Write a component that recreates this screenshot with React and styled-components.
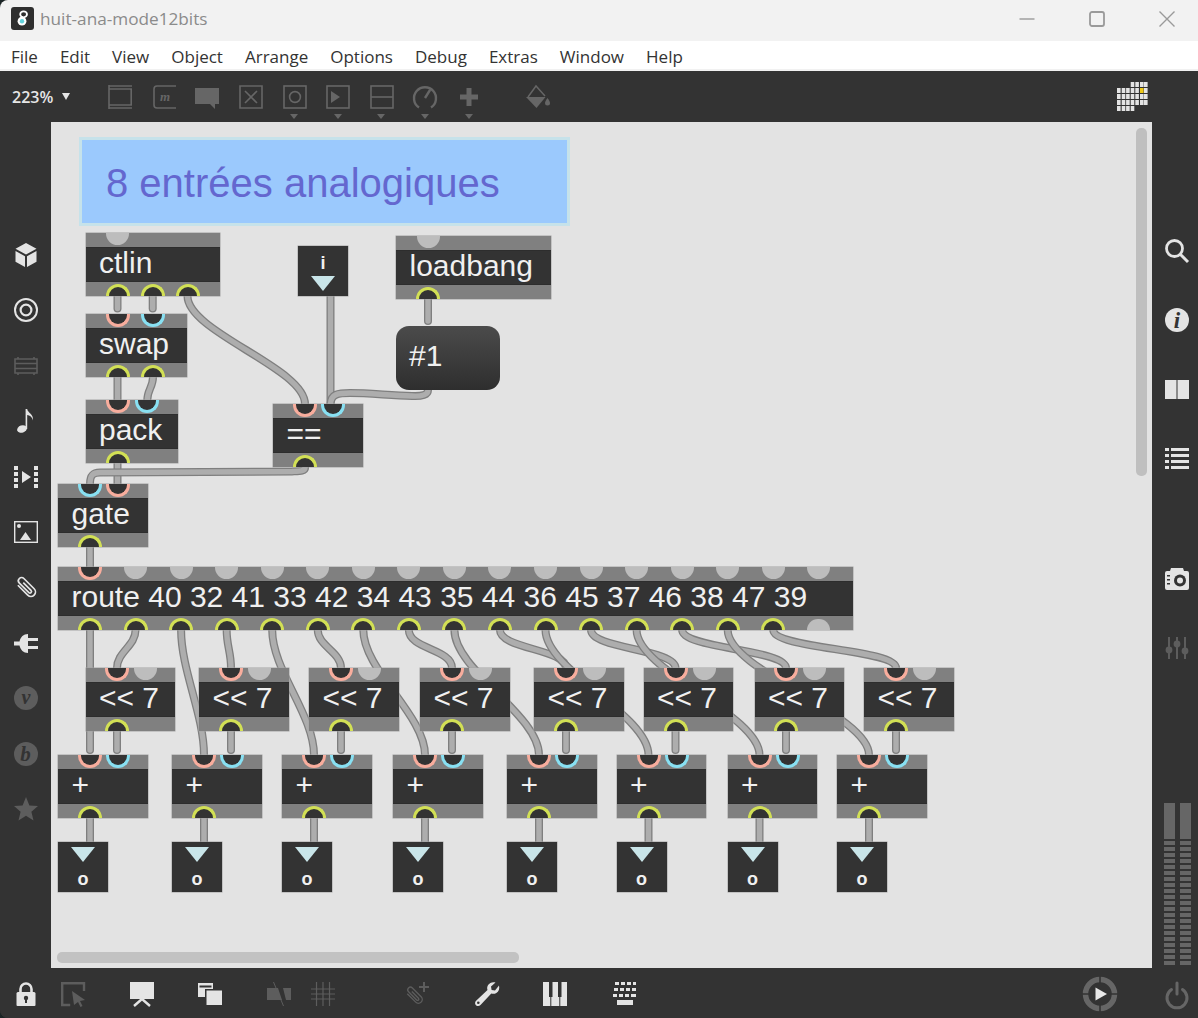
import React from 'react';
import styled, { createGlobalStyle } from 'styled-components';

const GlobalStyle = createGlobalStyle`
  html, body {
    margin: 0;
    padding: 0;
    background: #1b2526;
  }
  #root {
    width: 1198px;
    height: 1018px;
  }
`;

const Win = styled.div`
  width: 1198px;
  height: 1018px;
  display: grid;
  grid-template-rows: 41px 30px 51px 846px 50px;
  border-radius: 8px 0 0 8px;
  overflow: hidden;
  background: #333333;
  font-family: 'Liberation Sans', Arial, sans-serif;
`;

const TitleBar = styled.div`
  display: flex;
  align-items: center;
  box-sizing: border-box;
  background: #f2f2f2;
  padding: 0 0 4px 11px;
`;

const TitleText = styled.span`
  margin-left: 6px;
  font-family: 'Open Sans', sans-serif;
  font-size: 17.2px;
  color: #8b8b8b;
`;

const WinButtons = styled.div`
  margin-left: auto;
  display: flex;
  align-items: center;
  padding-right: 23px;
  gap: 54px;
`;

const WinBtn = styled.svg`
  width: 16px;
  height: 16px;
  fill: none;
  stroke: #9a9a9a;
  stroke-width: 1.4;
`;

const MenuBar = styled.div`
  display: flex;
  align-items: center;
  gap: 22px;
  padding: 2px 0 0 11px;
  background: #ffffff;
  border-bottom: 2px solid #f1f1f1;
  box-sizing: border-box;
  font-family: 'Open Sans', sans-serif;
  font-size: 17px;
  color: #333333;
`;

const ToolBar = styled.div`
  display: flex;
  align-items: center;
  padding-left: 12px;
  background: #333333;
`;

const ZoomText = styled.span`
  font-family: 'Open Sans', sans-serif;
  font-size: 16px;
  font-weight: 600;
  color: #e6e6e6;
`;

const ZoomCaret = styled.span`
  margin-left: 9px;
  border-left: 4.5px solid transparent;
  border-right: 4.5px solid transparent;
  border-top: 7px solid #e6e6e6;
`;

const ToolGroup = styled.div`
  display: flex;
  align-items: center;
  gap: 19.6px;
  margin-left: 38px;
`;

const ToolSlot = styled.span`
  position: relative;
  display: flex;
  margin-left: ${(p) => p.$gap || 0}px;
  &::after {
    content: ${(p) => (p.$caret ? "''" : 'none')};
    position: absolute;
    left: 7.5px;
    bottom: -10px;
    border-left: 4.5px solid transparent;
    border-right: 4.5px solid transparent;
    border-top: 5px solid #666666;
  }
`;

const Middle = styled.div`
  display: grid;
  grid-template-columns: 51px 1101px 46px;
  min-height: 0;
`;

const LeftRail = styled.div`
  display: flex;
  flex-direction: column;
  align-items: center;
  gap: 31.4px;
  padding-top: 121px;
`;

const RightRail = styled.div`
  display: flex;
  flex-direction: column;
  align-items: center;
  padding: 117px 0 3px 4px;
`;

const RailGroup = styled.div`
  display: flex;
  flex-direction: column;
  gap: 45.3px;
  margin-top: ${(p) => p.$top || 0}px;
`;

const Meters = styled.div`
  margin-top: auto;
  display: flex;
  gap: 5px;
`;

const MeterColumn = styled.div`
  display: flex;
  flex-direction: column;
  gap: 2px;
  width: 11px;
`;

const MeterTop = styled.div`
  height: 36px;
  background: #666666;
`;

const MeterCell = styled.div`
  height: 4px;
  background: #666666;
`;

const Canvas = styled.div`
  position: relative;
  background: #e3e3e3;
  overflow: hidden;
`;

const CordLayer = styled.svg`
  position: absolute;
  left: 0;
  top: 0;
  width: 1101px;
  height: 846px;
  fill: none;
  stroke-linecap: round;
  stroke-linejoin: round;
`;

const Comment = styled.div`
  position: absolute;
  left: 28px;
  top: 15px;
  width: 491px;
  height: 89px;
  box-sizing: border-box;
  border: 3px solid #c6e2ea;
  background: #9bc9fd;
  padding: 20px 0 0 24px;
  font-size: 40px;
  line-height: 46px;
  color: #6467cf;
`;

const Node = styled.div`
  position: absolute;
  left: ${(p) => p.$x - 51}px;
  top: ${(p) => p.$y - 122}px;
  width: ${(p) => p.$w}px;
  display: flex;
  flex-direction: column;
  box-shadow: 0 0 0 0.5px #a2a2a2;
`;

const Strip = styled.div`
  position: relative;
  height: 14px;
  background: #808080;
`;

const Label = styled.div`
  height: 35px;
  box-sizing: border-box;
  padding-left: 13.5px;
  background: #333333;
  border-top: 1px solid #2d2d2d;
  border-bottom: 1px solid #2d2d2d;
  font-size: 30px;
  line-height: 30px;
  color: #f0f0f0;
  white-space: pre;
`;

const portColours = { hot: '#f8ad9d', cold: '#88e0f2', out: '#d2e055' };

const Port = styled.span`
  position: absolute;
  left: ${(p) => p.$left}px;
  width: 24px;
  height: 12.5px;
  box-sizing: border-box;
  background: #333333;
  border: 3px solid ${(p) => portColours[p.$kind]};
  ${(p) =>
    p.$kind === 'out'
      ? 'bottom: 0; border-bottom: none; border-radius: 12.5px 12.5px 0 0;'
      : 'top: 0; border-top: none; border-radius: 0 0 12.5px 12.5px;'}
`;

const IdlePort = styled.span`
  position: absolute;
  left: ${(p) => p.$left}px;
  width: 23px;
  height: 11.5px;
  background: #bdbdbd;
  ${(p) =>
    p.$bottom
      ? 'bottom: 0; border-radius: 12px 12px 0 0;'
      : 'top: 0; border-radius: 0 0 12px 12px;'}
`;

const Message = styled.div`
  position: absolute;
  left: 345px;
  top: 204px;
  width: 104px;
  height: 64px;
  box-sizing: border-box;
  padding: 15px 0 0 13px;
  border-radius: 13px;
  background: linear-gradient(#4b4b4b, #2e2e2e);
  font-size: 30px;
  line-height: 30px;
  color: #f0f0f0;
`;

const Pad = styled.div`
  position: absolute;
  left: ${(p) => p.$x - 51}px;
  top: ${(p) => p.$y - 122}px;
  width: 50px;
  height: 50px;
  display: flex;
  flex-direction: column;
  align-items: center;
  background: #333333;
  box-shadow: 0 0 0 0.5px #a2a2a2;
`;

const Arrow = styled.span`
  margin-top: ${(p) => p.$top}px;
  border-left: 12.5px solid transparent;
  border-right: 12.5px solid transparent;
  border-top: 15px solid #c9e5e9;
`;

const PadText = styled.span`
  margin-top: ${(p) => p.$top}px;
  font-size: 18px;
  font-weight: 700;
  line-height: 18px;
  color: #f0f0f0;
`;

const VScroll = styled.div`
  position: absolute;
  left: 1085px;
  top: 6px;
  width: 11px;
  height: 348px;
  border-radius: 5px;
  background: #bfbfbf;
`;

const HScroll = styled.div`
  position: absolute;
  left: 6px;
  top: 830px;
  width: 462px;
  height: 11px;
  border-radius: 5px;
  background: #c2c2c2;
`;

const BottomBar = styled.div`
  display: flex;
  align-items: center;
  padding: 1px 9px 0 14px;
  background: #333333;
`;

const BarSlot = styled.span`
  display: flex;
  margin-left: ${(p) => (p.$auto ? 'auto' : `${p.$gap || 0}px`)};
`;

const tones = { on: '#e4e4e4', dim: '#5d5d5d', mid: '#666666' };

const Ico = styled.svg`
  display: block;
  width: ${(p) => p.$size || 24}px;
  height: ${(p) => p.$size || 24}px;
  color: ${(p) => tones[p.$tone || 'on']};
  fill: none;
  stroke: none;
  overflow: visible;
`;

const SerifMark = styled.text`
  font-family: 'Liberation Serif', serif;
  font-style: italic;
  font-weight: 700;
`;

const Svg = ({ tone, size, children }) => (
  <Ico viewBox="0 0 24 24" $tone={tone} $size={size}>
    {children}
  </Ico>
);

const stroke = (w) => ({ stroke: 'currentColor', strokeWidth: w, fill: 'none' });
const solid = { fill: 'currentColor' };

const MaxLogo = () => (
  <svg width="23" height="23" viewBox="0 0 23 23">
    <rect width="23" height="23" rx="3" fill="#2f2f2f" />
    <ellipse cx="12.6" cy="7.3" rx="3.4" ry="3" fill="none" stroke="#fff" strokeWidth="1.8" />
    <circle cx="11" cy="14.2" r="4.4" fill="#fff" />
    <circle cx="11" cy="14.2" r="2.2" fill="#63d3dc" />
  </svg>
);

const GridMark = () => {
  const cols = [0, 4.7, 9.1, 13.7, 18.3, 23, 27];
  const rows = [0, 6, 12, 18, 24];
  const cells = [];
  rows.forEach((y, r) =>
    cols.forEach((x, c) => {
      if ((r === 0 && c < 3) || (r === 4 && c > 3)) return;
      const hit = r === 1 && c === 5;
      cells.push(
        <rect key={`${r}-${c}`} x={x} y={y} width="3.6" height="5" fill={hit ? '#eec919' : '#e4e4e4'} />
      );
    })
  );
  return (
    <svg width="31" height="29" viewBox="0 0 31 29">
      {cells}
    </svg>
  );
};

const toolIcons = [
  <Svg tone="mid">
    <path {...stroke(1.6)} d="M1 0v24M1 1h23M1 4h23M1 20h23M1 23h23M23.2 4v16" />
  </Svg>,
  <Svg tone="mid">
    <path {...stroke(1.6)} d="M24 1H5a3 3 0 0 0-3 3v16a3 3 0 0 0 3 3h19" />
    <SerifMark x="8" y="16" fontSize="13" fill="currentColor">m</SerifMark>
  </Svg>,
  <Svg tone="mid">
    <path {...solid} d="M0 3h24v16h-4v5l-5-5H0z" />
  </Svg>,
  <Svg tone="mid">
    <path {...stroke(1.6)} d="M1 1h22v22H1zM6 6l12 12M18 6L6 18" />
  </Svg>,
  <Svg tone="mid">
    <rect {...stroke(1.6)} x="1" y="1" width="22" height="22" />
    <circle {...stroke(1.6)} cx="12" cy="12" r="5.4" />
  </Svg>,
  <Svg tone="mid">
    <rect {...stroke(1.6)} x="1" y="1" width="22" height="22" />
    <path {...solid} d="M5 6l9 6-9 6z" />
  </Svg>,
  <Svg tone="mid">
    <rect {...stroke(1.6)} x="1" y="1" width="22" height="22" />
    <path {...stroke(1.6)} d="M1 12h22" />
  </Svg>,
  <Svg tone="mid">
    <path {...stroke(2.4)} d="M6 22.5A11 11 0 1 1 18 22.5M12 13l5-8" />
  </Svg>,
  <Svg tone="mid">
    <path {...solid} d="M9.5 3h5v6.5H21v5h-6.5V21h-5v-6.5H3v-5h6.5z" />
  </Svg>,
];

const Bucket = () => (
  <Svg tone="mid">
    <path {...stroke(1.5)} d="M2 12L10 1l9 10" />
    <path {...solid} d="M0 12h19.5L10.5 23z" />
    <path {...solid} d="M21.5 13c1.6 2.4 2.5 3.8 2.5 5a2.5 2.5 0 0 1-5 0c0-1.2.9-2.6 2.5-5z" />
  </Svg>
);

const clipPath = 'M7.5 5v14a4.5 4.5 0 0 0 9 0V4.5a3.2 3.2 0 0 0-6.4 0V18a1.5 1.5 0 0 0 3 0V7';

const leftIcons = [
  <Svg>
    <path {...solid} d="M12 0l10.5 5.7L12 11.4 1.5 5.7zM1.5 8l9.5 5.2V24l-9.5-5.2zM22.5 8L13 13.2V24l9.5-5.2z" />
  </Svg>,
  <Svg>
    <circle {...stroke(2)} cx="12" cy="12" r="11" />
    <circle {...stroke(2.2)} cx="12" cy="12" r="5.4" />
  </Svg>,
  <Svg tone="dim">
    <path {...stroke(1.6)} d="M1 5h22v14H1zM1 9.5h22M1 14.5h22M4 5V3M20 5V3M4 19v2M20 19v2" />
  </Svg>,
  <Svg>
    <ellipse {...solid} cx="8" cy="20" rx="5" ry="3.6" transform="rotate(-18 8 20)" />
    <path {...solid} d="M11.6 0h1.6c.5 4 6.6 5 5.8 11.6-.5-3.6-3.4-5.4-5.8-5.7V20h-1.6z" />
  </Svg>,
  <Svg>
    <path {...solid} d="M0 1h4v4H0zM0 7h4v4H0zM0 13h4v4H0zM0 19h4v4H0zM20 1h4v4h-4zM20 7h4v4h-4zM20 13h4v4h-4zM20 19h4v4h-4zM8 6l9 6-9 6z" />
  </Svg>,
  <Svg>
    <rect {...stroke(1.4)} x="0.7" y="1.7" width="22.6" height="20.6" />
    <circle {...solid} cx="5" cy="6" r="2" />
    <path {...solid} d="M6 20l5.5-8 5.5 8z" />
  </Svg>,
  <Svg>
    <path {...stroke(1.7)} d={clipPath} transform="rotate(-45 12 12)" />
  </Svg>,
  <Svg>
    <path {...solid} d="M0 10.5h5.5C6.5 6 9.5 3 14 3v4h10v3h-10v5h10v3H14v4c-4.5 0-7.5-3-8.5-7.5H0z" />
  </Svg>,
  <Svg tone="dim">
    <circle {...solid} cx="12" cy="12" r="12" />
    <SerifMark x="12" y="18" fontSize="20" textAnchor="middle" fill="#333333">v</SerifMark>
  </Svg>,
  <Svg tone="dim">
    <circle {...solid} cx="12" cy="12" r="12" />
    <SerifMark x="11.5" y="19" fontSize="21" textAnchor="middle" fill="#333333">b</SerifMark>
  </Svg>,
  <Svg tone="dim">
    <path {...solid} d="M12 0l3.4 8.4 8.6.7-6.6 5.7 2.1 8.8L12 18.800l-7.5 4.8 2.1-8.8L0 9.100l8.600-.7z" />
  </Svg>,
];

const rightTop = [
  <Svg>
    <circle {...stroke(2.8)} cx="9.5" cy="9.5" r="8" />
    <path {...stroke(3)} d="M15 15l8 8" />
  </Svg>,
  <Svg>
    <circle {...solid} cx="12" cy="12" r="12" />
    <SerifMark x="12" y="20" fontSize="23" textAnchor="middle" fill="#333333">i</SerifMark>
  </Svg>,
  <Svg>
    <path {...solid} d="M0 2h11.5v19H0zM12.5 2H24v19H12.5z" />
  </Svg>,
  <Svg>
    <path {...solid} d="M0 1h4v3H0zM6 1h18v3H6zM0 7h4v3H0zM6 7h18v3H6zM0 13h4v3H0zM6 13h18v3H6zM0 19h4v3H0zM6 19h18v3H6z" />
  </Svg>,
];

const rightLow = [
  <Svg>
    <path {...solid} d="M2 4h3l1-3h12l1 3h3a2 2 0 0 1 2 2v15a2 2 0 0 1-2 2H2a2 2 0 0 1-2-2V6a2 2 0 0 1 2-2z" />
    <circle cx="15" cy="13.5" r="6" fill="#333333" />
    <circle {...solid} cx="15" cy="13.5" r="3" />
    <path fill="#333333" d="M2 8h3v1.5H2zM2 12h3v1.5H2zM2 16h3v1.5H2z" />
  </Svg>,
  <Svg tone="dim">
    <path {...stroke(2)} d="M4 1v22M12 1v22M20 1v22" />
    <circle {...solid} cx="4" cy="14" r="3.4" />
    <circle {...solid} cx="12" cy="8" r="3.4" />
    <circle {...solid} cx="20" cy="15" r="3.4" />
  </Svg>,
];

const bottomIcons = [
  {
    gap: 0,
    icon: (
      <Svg>
        <path {...stroke(2.6)} d="M6.5 11V7a5.5 5.5 0 0 1 11 0v4" />
        <path {...solid} d="M4 10h16a1.5 1.5 0 0 1 1.5 1.5V23a1 1 0 0 1-1 1h-17a1 1 0 0 1-1-1V11.5A1.5 1.5 0 0 1 4 10z" />
        <circle cx="12" cy="16" r="2.2" fill="#333333" />
        <path fill="#333333" d="M11 16h2v5h-2z" />
      </Svg>
    ),
  },
  {
    gap: 23,
    icon: (
      <Svg tone="dim">
        <path {...stroke(2.4)} d="M23 9V1.2H1.2V23h8" />
        <path {...solid} d="M11 9l13 9-5 1 2.5 5-2 1-2.5-5-4 3z" />
      </Svg>
    ),
  },
  {
    gap: 45,
    icon: (
      <Svg>
        <path {...solid} d="M0 0h24v17H0z" />
        <path {...stroke(2.4)} d="M12 17l-8 7M12 17l8 7" />
      </Svg>
    ),
  },
  {
    gap: 44,
    icon: (
      <Svg>
        <path {...solid} d="M0 1h15v6H7v8H0z" />
        <path {...solid} d="M8.5 8.5H24V23H8.5z" />
        <path fill="#333333" d="M1.5 3.5h12v2h-12z" />
      </Svg>
    ),
  },
  {
    gap: 45,
    icon: (
      <Svg tone="dim">
        <path {...solid} d="M0 6h11l4 12H0zM16 6h8v12h-5z" />
        <path {...stroke(1)} d="M6.5 0l10 24" />
      </Svg>
    ),
  },
  {
    gap: 20,
    icon: (
      <Svg tone="dim">
        <path {...stroke(1.2)} d="M0 7h24M0 12h24M0 17h24M5.5 0v24M12 0v24M18.5 0v24" />
      </Svg>
    ),
  },
  {
    gap: 71,
    icon: (
      <Svg tone="dim">
        <g transform="translate(-2 3) scale(0.85) rotate(-45 12 12)">
          <path {...stroke(1.6)} d={clipPath} />
        </g>
        <path {...stroke(2)} d="M18 0v10M13 5h10" />
      </Svg>
    ),
  },
  {
    gap: 45,
    icon: (
      <Svg>
        <path
          {...solid}
          d="M24 3.5c.8 3.2-.2 6-2.7 7.5-1.7 1-3.5 1-5 .5L5.5 23c-1.3 1.4-3.3 1.4-4.5.2-1.3-1.3-1.2-3.3.1-4.5L12.500 8c-.6-1.700-.4-3.500.6-5C14.600.6 17.500-.4 20.500.4L16 4.500l.6 3.400 3.400.7z"
        />
        <circle cx="3.3" cy="20.8" r="1.3" fill="#333333" />
      </Svg>
    ),
  },
  {
    gap: 44,
    icon: (
      <Svg>
        <path {...solid} d="M0 0h24v24H0z" />
        <path fill="#333333" d="M6 0h3.500v15H6zM15 0h3.500v15H15zM7.300 15h1v9h-1zM16.300 15h1v9h-1z" />
      </Svg>
    ),
  },
  {
    gap: 46,
    icon: (
      <Svg>
        <path
          {...solid}
          d="M2 0h4v3H2zM8 0h4v3H8zM14 0h4v3h-4zM20 0h3v3h-3zM1 6h4v3H1zM7 6h4v3H7zM13 6h4v3h-4zM19 6h4v3h-4zM0 12h4v3H0zM6 12h4v3H6zM12 12h4v3h-4zM18 12h5v3h-5zM4 18h16v5H4z"
        />
      </Svg>
    ),
  },
];

const PlayRing = () => (
  <Ico viewBox="0 0 36 36" $tone="mid" $size={36}>
    <circle {...stroke(5.5)} cx="18" cy="18" r="14.5" />
    <path stroke="#333333" strokeWidth="1.6" d="M18 0v8M18 28v8M0 18h8M28 18h8" />
    <path fill="#e8e8e8" d="M13.5 11.5L25 18l-11.5 6.5z" />
  </Ico>
);

const PowerMark = () => (
  <Svg tone="mid">
    <path {...stroke(3)} d="M6.5 7.5a10 10 0 1 0 11 0" strokeLinecap="round" />
    <path {...stroke(3)} d="M12 1v11" strokeLinecap="round" />
  </Svg>
);

const routeStep = 45.55;
const routeX = (i) => 90 + routeStep * i;
const shiftInlets = [117, 231, 341, 452, 566, 675.5, 786, 896];
const shiftBoxes = [85.5, 199, 309, 420, 534, 643.5, 754.5, 864];
const addBoxes = [58, 172, 282, 393, 507, 616.5, 727.5, 837];

const bend = (x1, y1, x2, y2, h) =>
  `M${x1} ${y1}C${x1} ${y1 + h} ${x2} ${y2 - h} ${x2} ${y2}`;

const buildCords = () => {
  const out = [
    'M117.5 296V308.5',
    'M152.7 296V308.5',
    bend(187.5, 296, 305, 404, 36),
    bend(117.5, 377, 117.5, 400, 6),
    bend(153, 377, 147.3, 400, 10),
    'M330.5 296V404',
    'M428 299V321',
    'M428 390C428 395 422 396.5 412 396C390 395.5 370 393 350 393C338 393 331 394 330.5 404',
    'M117.5 462V484',
    'M305 466V468C305 471 300 471 292 471.5L100 472.5C93 472.5 90 475 90 484',
    'M90 546V567',
  ];
  for (let i = 0; i < 16; i += 1) {
    const n = Math.floor(i / 2);
    if (i === 0) {
      out.push('M90 630V750');
    } else if (i % 2 === 0) {
      out.push(bend(routeX(i), 630, addBoxes[n] + 32, 755, 40));
    } else {
      const target = shiftInlets[n];
      out.push(bend(routeX(i), 630, target, 668, Math.abs(target - routeX(i)) > 30 ? 19 : 16));
    }
  }
  shiftInlets.forEach((x, n) => {
    out.push(`M${x} 731V750`);
    out.push(`M${addBoxes[n] + 32} 818V842`);
  });
  return out;
};

const Box = ({ x, y, w, text, inlets = [], outlets = [], idleTop = [], idleBottom = [] }) => (
  <Node $x={x} $y={y} $w={w}>
    <Strip>
      {idleTop.map((cx) => (
        <IdlePort key={cx} $left={cx - x - 11.5} />
      ))}
      {inlets.map(([cx, kind]) => (
        <Port key={cx} $left={cx - x - 12} $kind={kind} />
      ))}
    </Strip>
    <Label>{text}</Label>
    <Strip>
      {idleBottom.map((cx) => (
        <IdlePort key={cx} $left={cx - x - 11.5} $bottom />
      ))}
      {outlets.map((cx) => (
        <Port key={cx} $left={cx - x - 12} $kind="out" />
      ))}
    </Strip>
  </Node>
);

const menus = ['File', 'Edit', 'View', 'Object', 'Arrange', 'Options', 'Debug', 'Extras', 'Window', 'Help'];
const routeOutlets = Array.from({ length: 16 }, (_, i) => routeX(i));
const routeIdle = Array.from({ length: 16 }, (_, i) => routeX(i + 1));
const meterCells = Array.from({ length: 21 }, (_, i) => i);

export default function App() {
  const cords = buildCords();
  return (
    <>
      <GlobalStyle />
      <Win>
        <TitleBar>
          <MaxLogo />
          <TitleText>huit-ana-mode12bits</TitleText>
          <WinButtons>
            <WinBtn viewBox="0 0 16 16">
              <path d="M0.5 8h15" />
            </WinBtn>
            <WinBtn viewBox="0 0 16 16">
              <rect x="1" y="1" width="14" height="14" rx="2" strokeWidth="1.8" />
            </WinBtn>
            <WinBtn viewBox="0 0 16 16">
              <path d="M0.5 0.5l15 15M15.5 0.5l-15 15" />
            </WinBtn>
          </WinButtons>
        </TitleBar>

        <MenuBar>
          {menus.map((m) => (
            <span key={m}>{m}</span>
          ))}
        </MenuBar>

        <ToolBar>
          <ZoomText>223%</ZoomText>
          <ZoomCaret />
          <ToolGroup>
            {toolIcons.map((icon, i) => (
              <ToolSlot key={i} $caret={i >= 4}>
                {icon}
              </ToolSlot>
            ))}
            <ToolSlot $gap={25}>
              <Bucket />
            </ToolSlot>
          </ToolGroup>
          <ToolSlot $gap={567}>
            <GridMark />
          </ToolSlot>
        </ToolBar>

        <Middle>
          <LeftRail>
            {leftIcons.map((icon, i) => (
              <span key={i}>{icon}</span>
            ))}
          </LeftRail>

          <Canvas>
            <CordLayer viewBox="51 122 1101 846">
              {cords.map((d, i) => (
                <g key={i}>
                  <path d={d} stroke="#7f7f7f" strokeWidth="8" />
                  <path d={d} stroke="#adadad" strokeWidth="5.4" />
                </g>
              ))}
            </CordLayer>

            <Comment>8 entrées analogiques</Comment>

            <Box x={85.5} y={233} w={134} text="ctlin" idleTop={[117.5]} outlets={[117.5, 152.7, 187.5]} />
            <Box x={85.5} y={314} w={101} text="swap" inlets={[[117.5, 'hot'], [153, 'cold']]} outlets={[117.5, 153]} />
            <Box x={85.5} y={400} w={92.5} text="pack" inlets={[[117.5, 'hot'], [147.3, 'cold']]} outlets={[117.5]} />
            <Box x={396} y={236} w={155} text="loadbang" idleTop={[428]} outlets={[428]} />
            <Box x={273} y={404} w={89.5} text="==" inlets={[[304.7, 'hot'], [333, 'cold']]} outlets={[304.7]} />
            <Box x={58} y={484} w={90} text="gate" inlets={[[90, 'cold'], [118.3, 'hot']]} outlets={[90]} />
            <Box
              x={58}
              y={567}
              w={795}
              text="route 40 32 41 33 42 34 43 35 44 36 45 37 46 38 47 39"
              inlets={[[90, 'hot']]}
              idleTop={routeIdle}
              outlets={routeOutlets}
              idleBottom={[routeX(16)]}
            />

            <Pad $x={298} $y={246}>
              <PadText $top={8}>i</PadText>
              <Arrow $top={4} />
            </Pad>
            <Message>#1</Message>

            {shiftBoxes.map((x, n) => (
              <Box
                key={x}
                x={x}
                y={668}
                w={89.5}
                text="<< 7"
                inlets={[[shiftInlets[n], 'hot']]}
                idleTop={[shiftInlets[n] + 28.5]}
                outlets={[shiftInlets[n]]}
              />
            ))}

            {addBoxes.map((x) => (
              <Box
                key={x}
                x={x}
                y={755}
                w={89.5}
                text="+"
                inlets={[[x + 32, 'hot'], [x + 60.3, 'cold']]}
                outlets={[x + 32]}
              />
            ))}

            {addBoxes.map((x) => (
              <Pad key={x} $x={x} $y={842}>
                <Arrow $top={5} />
                <PadText $top={8}>o</PadText>
              </Pad>
            ))}

            <VScroll />
            <HScroll />
          </Canvas>

          <RightRail>
            <RailGroup>
              {rightTop.map((icon, i) => (
                <span key={i}>{icon}</span>
              ))}
            </RailGroup>
            <RailGroup $top={96}>
              {rightLow.map((icon, i) => (
                <span key={i}>{icon}</span>
              ))}
            </RailGroup>
            <Meters>
              {[0, 1].map((c) => (
                <MeterColumn key={c}>
                  <MeterTop />
                  {meterCells.map((k) => (
                    <MeterCell key={k} />
                  ))}
                </MeterColumn>
              ))}
            </Meters>
          </RightRail>
        </Middle>

        <BottomBar>
          {bottomIcons.map(({ gap, icon }, i) => (
            <BarSlot key={i} $gap={gap}>
              {icon}
            </BarSlot>
          ))}
          <BarSlot $auto>
            <PlayRing />
          </BarSlot>
          <BarSlot $gap={47}>
            <PowerMark />
          </BarSlot>
        </BottomBar>
      </Win>
    </>
  );
}
